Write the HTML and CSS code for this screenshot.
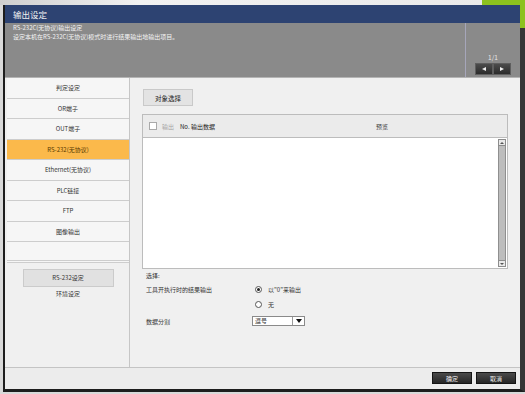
FILE: index.html
```html
<!DOCTYPE html>
<html lang="zh">
<head>
<meta charset="utf-8">
<title>输出设定</title>
<link rel="stylesheet" href="styles.css">
</head>
<body>
<div class="desk-top"></div>
<div class="desk-green"></div>
<div class="dialog">
  <div class="titlebar">输出设定</div>
  <div class="header">
    <div class="header-text">
      <div>RS-232C(无协议)输出设定</div>
      <div>设定本机在RS-232C(无协议)模式时进行结果输出地输出项目。</div>
    </div>
    <div class="header-side">
      <div class="pager-label">1/1</div>
      <div class="pager">
        <button class="pager-btn"><span class="tri-left"></span></button>
        <button class="pager-btn"><span class="tri-right"></span></button>
      </div>
    </div>
  </div>
  <div class="main">
    <div class="nav">
      <div class="nav-item">判定设定</div>
      <div class="nav-item">OR端子</div>
      <div class="nav-item">OUT端子</div>
      <div class="nav-item active">RS-232(无协议)</div>
      <div class="nav-item">Ethernet(无协议)</div>
      <div class="nav-item">PLC链接</div>
      <div class="nav-item">FTP</div>
      <div class="nav-item">图像输出</div>
      <div class="nav-item empty"></div>
      <div class="nav-extra">
        <button class="nav-btn">RS-232设定</button>
        <div class="nav-caption">环境设定</div>
      </div>
    </div>
    <div class="content">
      <button class="btn-light">对象选择</button>
      <div class="table">
        <div class="thead">
          <span class="checkbox"></span>
          <span class="th-out">输出</span>
          <span class="th-data">No. 输出数据</span>
          <span class="th-preview">预览</span>
        </div>
        <div class="tbody">
          <div class="rows"></div>
          <div class="scrollbar">
            <div class="sb-btn"><span class="sb-up"></span></div>
            <div class="sb-track"></div>
            <div class="sb-btn"><span class="sb-down"></span></div>
          </div>
        </div>
      </div>
      <div class="options">
        <div class="opt-label">选择:</div>
        <div></div>
        <div class="opt-label">工具开执行时的结果输出</div>
        <div class="radio-row"><span class="radio checked"></span>以"0"来输出</div>
        <div></div>
        <div class="radio-row"><span class="radio"></span>无</div>
        <div class="opt-label">数据分割</div>
        <div class="select"><span class="select-text">逗号</span><span class="select-arrow"></span></div>
      </div>
    </div>
  </div>
  <div class="footer">
    <button class="btn-dark">确定</button>
    <button class="btn-dark">取消</button>
  </div>
</div>
</body>
</html>
```
FILE: styles.css
```css
* { box-sizing: border-box; margin: 0; padding: 0; }
body {
  width: 525px;
  height: 394px;
  overflow: hidden;
  position: relative;
  background: #d9d9d9;
  font-family: "Noto Sans CJK SC", "Noto Sans", sans-serif;
  color: #333;
}
button { font-family: inherit; cursor: default; }
.desk-top {
  height: 5px;
  background: linear-gradient(90deg, #cfcfcf 0, #f2f2f2 140px, #e9e9e9 100%);
}
.desk-green {
  position: absolute;
  top: 0;
  right: 0;
  width: 43px;
  height: 28px;
  border-top: 5px solid #8cc21e;
  border-right: 5px solid #8cc21e;
}
.dialog {
  margin-left: 3px;
  width: 522px;
  height: 387px;
  border-left: 2px solid #1d1d1d;
  border-bottom: 3px solid #1d1d1d;
  border-right: 5px solid #363636;
  background: #f0f0f0;
  display: flex;
  flex-direction: column;
}
.titlebar {
  height: 18px;
  flex: none;
  background: #2d4372;
  color: #f2f2f2;
  font-size: 8.5px;
  line-height: 18px;
  padding-left: 8px;
}
.header {
  height: 55px;
  flex: none;
  background: #8a8a8a;
  border-bottom: 1px solid #b4b4b4;
  display: flex;
}
.header-text {
  flex: 1;
  padding: 1px 0 0 8px;
  color: #f4f4f4;
  font-size: 6px;
  line-height: 8.5px;
}
.header-side {
  width: 55px;
  border-left: 1px solid #a6a6ba;
  display: flex;
  flex-direction: column;
  justify-content: flex-end;
  align-items: center;
  padding-bottom: 2px;
}
.pager-label {
  color: #e8e8e8;
  font-size: 6.5px;
  line-height: 8px;
  margin-bottom: 2px;
}
.pager { display: flex; }
.pager-btn {
  width: 18px;
  height: 12px;
  background: linear-gradient(#4c4c4c, #2b2b2b);
  border: 1px solid #5e5e5e;
  display: flex;
  align-items: center;
  justify-content: center;
}
.tri-left, .tri-right { width: 0; height: 0; border-top: 2.5px solid transparent; border-bottom: 2.5px solid transparent; }
.tri-left { border-right: 4px solid #f0f0f0; }
.tri-right { border-left: 4px solid #f0f0f0; }

.main { flex: 1; display: flex; min-height: 0; }
.nav {
  width: 125px;
  flex: none;
  padding-left: 2px;
  border-right: 1px solid #c6c6c6;
  display: flex;
  flex-direction: column;
}
.nav-item {
  height: 20.5px;
  flex: none;
  background: #f6f6f6;
  border-bottom: 1px solid #cdcdcd;
  font-size: 6px;
  color: #333;
  display: flex;
  align-items: center;
  justify-content: center;
}
.nav-item.active { background: #fbb94b; color: #553800; }
.nav-item.empty { border-bottom: 3px double #cdcdcd; }
.nav-extra {
  padding-top: 6px;
  display: flex;
  flex-direction: column;
  align-items: center;
}
.nav-btn {
  width: 91px;
  height: 18px;
  background: #e1e1e1;
  border: 1px solid #cbcbcb;
  font-size: 6px;
  color: #333;
}
.nav-caption { font-size: 6px; line-height: 8px; margin-top: 3px; }

.content {
  flex: 1;
  padding: 11px 12px 0 12px;
  display: flex;
  flex-direction: column;
  align-items: flex-start;
}
.btn-light {
  margin-left: 1px;
  width: 50px;
  height: 17px;
  background: #e3e3e3;
  border: 1px solid #c9c9c9;
  font-size: 6.5px;
  color: #222;
}
.table {
  margin-top: 8px;
  width: 100%;
  height: 155px;
  border: 1px solid #bcbcbc;
  display: flex;
  flex-direction: column;
}
.thead {
  height: 23px;
  flex: none;
  background: #ebebeb;
  border-bottom: 1px solid #bcbcbc;
  display: flex;
  align-items: center;
  padding-left: 6px;
  font-size: 6px;
}
.checkbox {
  width: 8px;
  height: 8px;
  background: #fff;
  border: 1px solid #a9a9a9;
}
.th-out { margin-left: 5px; color: #a5a5a5; }
.th-data { margin-left: 6px; color: #222; }
.th-preview { margin-left: auto; margin-right: 119px; color: #444; }
.tbody { flex: 1; display: flex; background: #fff; }
.rows { flex: 1; }
.scrollbar {
  width: 8px;
  margin-right: 1px;
  display: flex;
  flex-direction: column;
  padding: 1px 0;
}
.sb-btn {
  height: 7px;
  flex: none;
  background: #e9e9e9;
  border: 1px solid #8c8c8c;
  display: flex;
  align-items: center;
  justify-content: center;
}
.sb-up, .sb-down { width: 0; height: 0; border-left: 2px solid transparent; border-right: 2px solid transparent; }
.sb-up { border-bottom: 2px solid #555; }
.sb-down { border-top: 2px solid #555; }
.sb-track {
  flex: 1;
  background: #bdbdbd;
  border-left: 1px solid #8f8f8f;
  border-right: 1px solid #8f8f8f;
}
.options {
  padding-left: 4px;
  display: grid;
  grid-template-columns: 106px auto;
  grid-template-rows: 12px 16px 14px 20px;
  align-items: center;
  font-size: 6px;
  color: #333;
}
.radio-row { display: flex; align-items: center; margin-left: 3px; }
.radio {
  width: 7px;
  height: 7px;
  border-radius: 50%;
  border: 1px solid #555;
  background: #fff;
  margin-right: 6px;
  position: relative;
}
.radio.checked::after {
  content: "";
  position: absolute;
  left: 1px;
  top: 1px;
  width: 3px;
  height: 3px;
  border-radius: 50%;
  background: #222;
}
.select {
  width: 53px;
  height: 10px;
  background: #fff;
  border: 1px solid #8a8a8a;
  display: flex;
  align-items: center;
}
.select-text { flex: 1; padding-left: 2px; font-size: 6px; line-height: 8px; }
.select-arrow {
  width: 12px;
  height: 100%;
  border-left: 1px solid #9a9a9a;
  display: flex;
  align-items: center;
  justify-content: center;
}
.select-arrow::after {
  content: "";
  width: 0;
  height: 0;
  border-left: 3.5px solid transparent;
  border-right: 3.5px solid transparent;
  border-top: 4px solid #111;
}
.footer {
  height: 22px;
  flex: none;
  background: #ececec;
  border-top: 1px solid #c4c4c4;
  display: flex;
  justify-content: flex-end;
  align-items: flex-start;
  gap: 4px;
  padding: 4px 4px 0 0;
}
.btn-dark {
  width: 40px;
  height: 12px;
  background: linear-gradient(#4a4a4a, #262626);
  border: 1px solid #151515;
  color: #f0f0f0;
  font-size: 6px;
}
```
